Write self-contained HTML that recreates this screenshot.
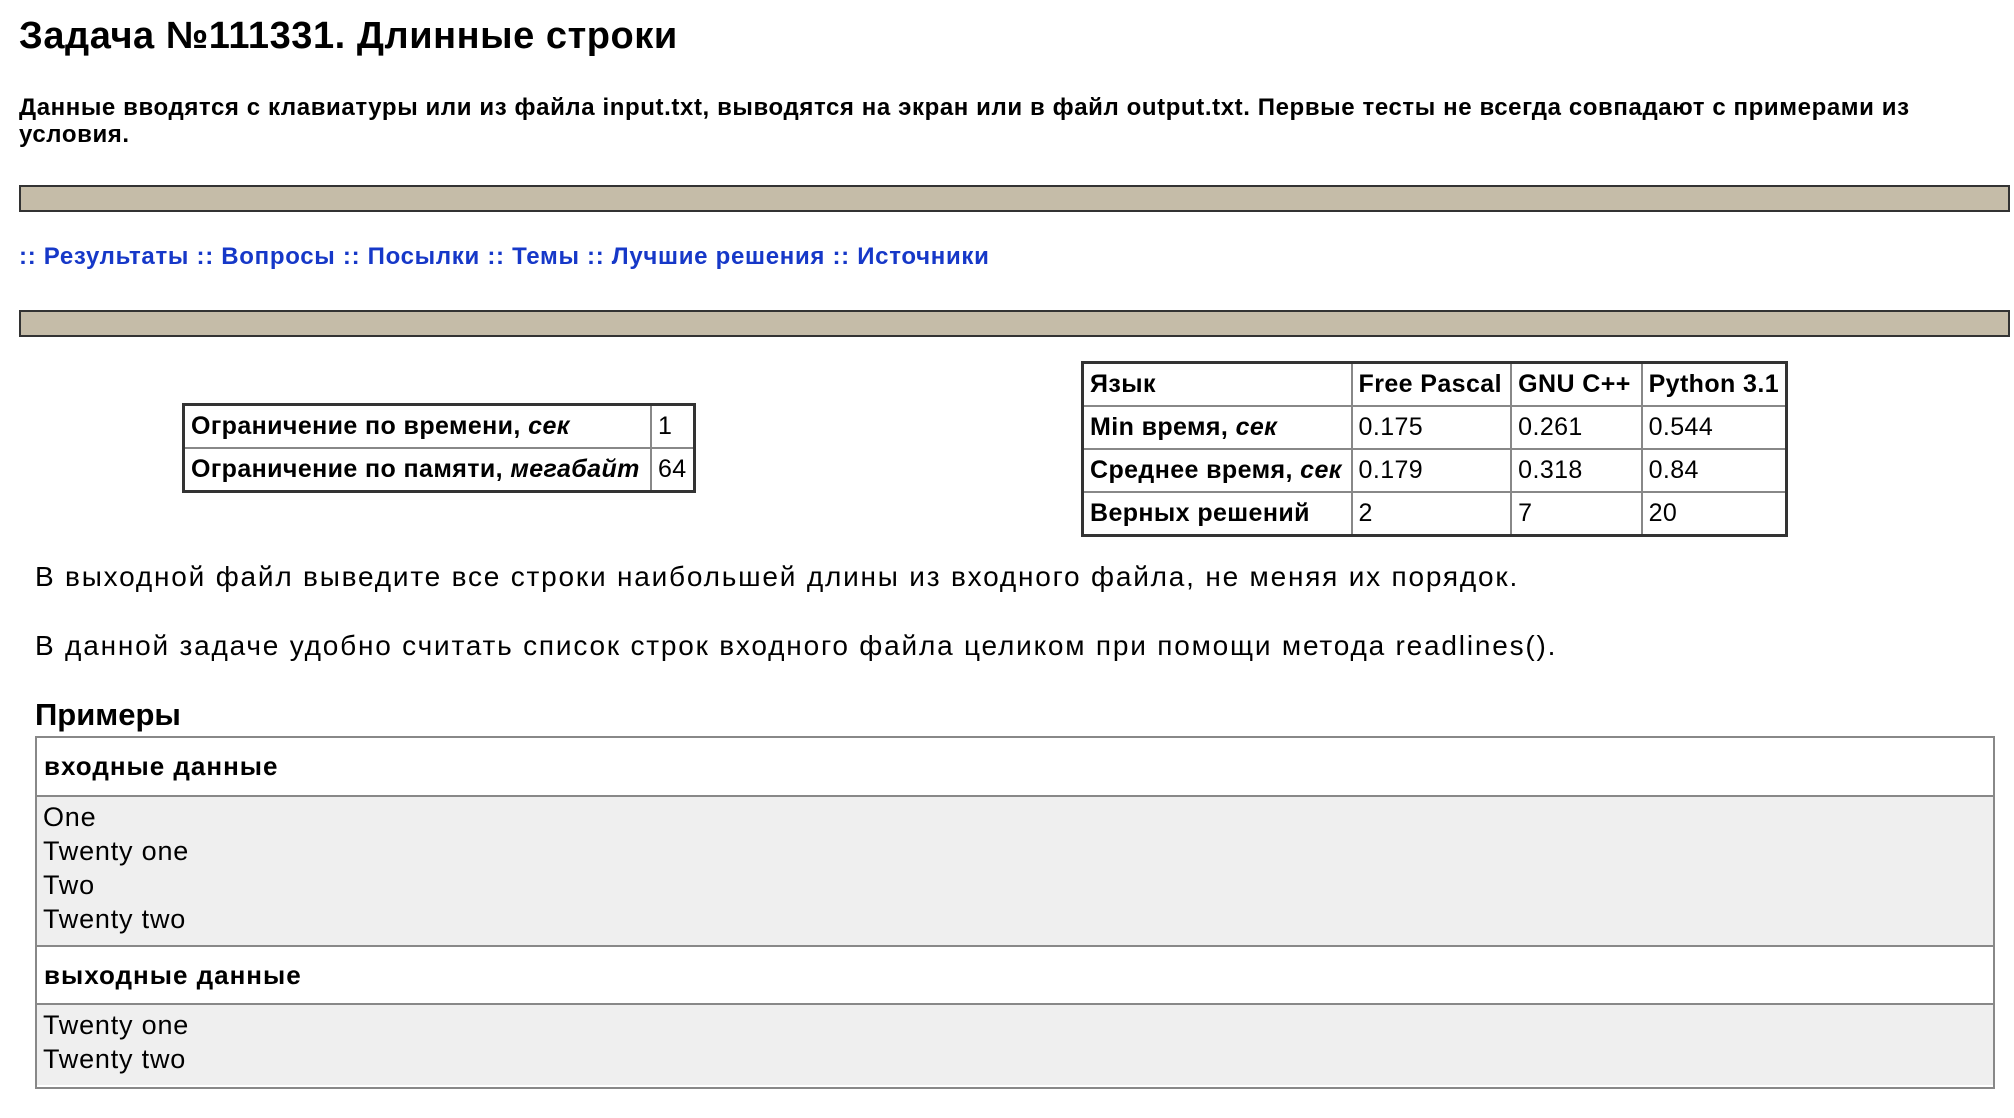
<!DOCTYPE html>
<html><head><meta charset="utf-8"><style>
body{margin:0;width:2014px;height:1118px;background:#fff;position:relative;overflow:hidden;font-family:"Liberation Sans",sans-serif;color:#000}
.a{position:absolute;white-space:nowrap}
.bar{position:absolute;left:19px;width:1987px;height:23px;background:#c5bca8;border:2px solid #333}
table{border-collapse:collapse;position:absolute;font-size:25px;letter-spacing:0.4px}
td{border:2px solid #888;padding:0 6px;height:41px;white-space:nowrap}
.t{border:3px solid #333}
a{color:#1638c8;text-decoration:none}
</style></head><body>
<div class="a" style="left:19px;top:15px;font-size:38px;font-weight:bold;letter-spacing:0.55px">Задача №111331. Длинные строки</div>
<div class="a" style="left:19px;top:94px;font-size:24px;font-weight:bold;line-height:27px;letter-spacing:0.6px">Данные вводятся с клавиатуры или из файла input.txt, выводятся на экран или в файл output.txt. Первые тесты не всегда совпадают с примерами из<br>условия.</div>
<div class="bar" style="top:185px"></div>
<div class="a" style="left:19px;top:243px;font-size:24px;font-weight:bold;color:#1638c8;letter-spacing:0.7px"><a>:: Результаты</a> <a>:: Вопросы</a> <a>:: Посылки</a> <a>:: Темы</a> <a>:: Лучшие решения</a> <a>:: Источники</a></div>
<div class="bar" style="top:310px"></div>
<table class="t" style="left:182px;top:403px;width:514px">
<tr><td><b>Ограничение по времени, <i>сек</i></b></td><td>1</td></tr>
<tr><td><b>Ограничение по памяти, <i>мегабайт</i></b></td><td>64</td></tr>
</table>
<table class="t" style="left:1081px;top:361px;width:707px">
<tr><td style="width:255px"><b>Язык</b></td><td style="width:146px"><b>Free Pascal</b></td><td style="width:117px"><b>GNU C++</b></td><td><b>Python 3.1</b></td></tr>
<tr><td><b>Min время, <i>сек</i></b></td><td>0.175</td><td>0.261</td><td>0.544</td></tr>
<tr><td><b>Среднее время, <i>сек</i></b></td><td>0.179</td><td>0.318</td><td>0.84</td></tr>
<tr><td><b>Верных решений</b></td><td>2</td><td>7</td><td>20</td></tr>
</table>
<div class="a" style="left:35px;top:561px;font-size:28px;letter-spacing:1.8px">В выходной файл выведите все строки наибольшей длины из входного файла, не меняя их порядок.</div>
<div class="a" style="left:35px;top:630px;font-size:28px;letter-spacing:1.8px">В данной задаче удобно считать список строк входного файла целиком при помощи метода readlines().</div>
<div class="a" style="left:35px;top:697px;font-size:31px;font-weight:bold">Примеры</div>
<div style="position:absolute;left:35px;top:736px;width:1956px;height:349px;border:2px solid #888">
<div style="height:57px;border-bottom:2px solid #888;font-size:26px;font-weight:bold;line-height:57px;padding-left:7px;letter-spacing:1px">входные данные</div>
<div style="height:150px;background:#efefef;border-bottom:2px solid #888;font-size:27px;line-height:34px;padding:3px 0 0 6px;box-sizing:border-box;letter-spacing:0.8px">One<br>Twenty one<br>Two<br>Twenty two</div>
<div style="height:56px;border-bottom:2px solid #888;font-size:26px;font-weight:bold;line-height:56px;padding-left:7px;letter-spacing:1px">выходные данные</div>
<div style="height:80px;background:#efefef;font-size:27px;line-height:34px;padding:3px 0 0 6px;box-sizing:border-box;letter-spacing:0.8px">Twenty one<br>Twenty two</div>
</div>
</body></html>
